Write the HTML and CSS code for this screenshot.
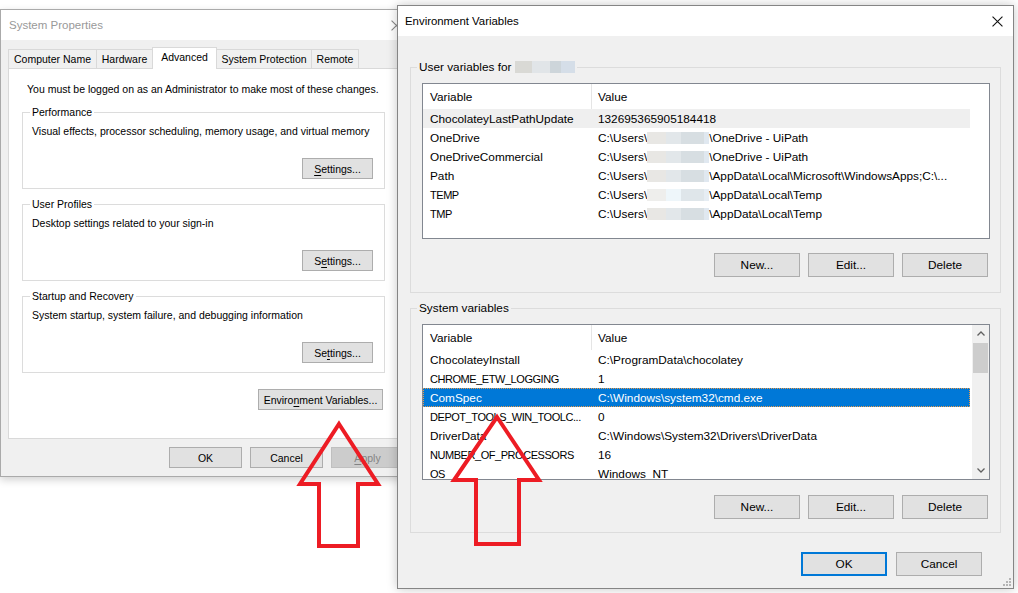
FILE: index.html
```html
<!DOCTYPE html>
<html lang="en">
<head>
    <meta charset="UTF-8">
    <title>System Properties - Environment Variables</title>
    <link rel="stylesheet" href="styles.css">
</head>
<body>
    <!-- System Properties (inactive, behind) -->
    <div class="window sysprops">
        <div class="titlebar">
            <span class="title">System Properties</span>
            <span class="close">
                <svg viewBox="0 0 10 10"><path d="M0.5 0.5L9.5 9.5M9.5 0.5L0.5 9.5"/></svg>
            </span>
        </div>
        <div class="window-body">
            <div class="tabs">
                <span class="tab" style="width: 89px">Computer Name</span>
                <span class="tab" style="width: 57px">Hardware</span>
                <span class="tab active" style="width: 65px">Advanced</span>
                <span class="tab" style="width: 96px">System Protection</span>
                <span class="tab" style="width: 48px">Remote</span>
            </div>
            <div class="tab-panel">
                <p class="note">You must be logged on as an Administrator to make most of these changes.</p>

                <fieldset class="group">
                    <legend>Performance</legend>
                    <p>Visual effects, processor scheduling, memory usage, and virtual memory</p>
                    <div class="group-actions">
                        <button class="btn btn-settings"><u>S</u>ettings...</button>
                    </div>
                </fieldset>

                <fieldset class="group">
                    <legend>User Profiles</legend>
                    <p>Desktop settings related to your sign-in</p>
                    <div class="group-actions">
                        <button class="btn btn-settings">S<u>e</u>ttings...</button>
                    </div>
                </fieldset>

                <fieldset class="group">
                    <legend>Startup and Recovery</legend>
                    <p>System startup, system failure, and debugging information</p>
                    <div class="group-actions">
                        <button class="btn btn-settings">Se<u>t</u>tings...</button>
                    </div>
                </fieldset>

                <div class="panel-actions">
                    <button class="btn btn-env">Enviro<u>n</u>ment Variables...</button>
                </div>
            </div>
            <div class="dialog-actions">
                <button class="btn btn-small">OK</button>
                <button class="btn btn-small">Cancel</button>
                <button class="btn btn-small" disabled><u>A</u>pply</button>
            </div>
        </div>
    </div>

    <!-- Environment Variables (active) -->
    <div class="window envvars">
        <div class="titlebar">
            <span class="title">Environment Variables</span>
            <span class="close">
                <svg viewBox="0 0 10 10"><path d="M0.5 0.5L9.5 9.5M9.5 0.5L0.5 9.5"/></svg>
            </span>
        </div>
        <div class="window-body">
            <fieldset class="group">
                <legend>User variables for <span class="blur blur-name"></span></legend>
                <div class="listview">
                    <div class="lv-body">
                        <div class="lv-head">
                            <span class="col-var">Variable</span>
                            <span class="col-val">Value</span>
                        </div>
                        <div class="lv-row hover">
                            <span class="col-var">ChocolateyLastPathUpdate</span>
                            <span class="col-val">132695365905184418</span>
                        </div>
                        <div class="lv-row">
                            <span class="col-var">OneDrive</span>
                            <span class="col-val">C:\Users\<span class="blur"></span>\OneDrive - UiPath</span>
                        </div>
                        <div class="lv-row">
                            <span class="col-var">OneDriveCommercial</span>
                            <span class="col-val">C:\Users\<span class="blur"></span>\OneDrive - UiPath</span>
                        </div>
                        <div class="lv-row">
                            <span class="col-var">Path</span>
                            <span class="col-val">C:\Users\<span class="blur"></span>\AppData\Local\Microsoft\WindowsApps;C:\...</span>
                        </div>
                        <div class="lv-row">
                            <span class="col-var caps">TEMP</span>
                            <span class="col-val">C:\Users\<span class="blur blur-light"></span>\AppData\Local\Temp</span>
                        </div>
                        <div class="lv-row">
                            <span class="col-var caps">TMP</span>
                            <span class="col-val">C:\Users\<span class="blur"></span>\AppData\Local\Temp</span>
                        </div>
                    </div>
                </div>
                <div class="list-actions">
                    <button class="btn btn-wide">New...</button>
                    <button class="btn btn-wide">Edit...</button>
                    <button class="btn btn-wide">Delete</button>
                </div>
            </fieldset>

            <fieldset class="group">
                <legend>System variables</legend>
                <div class="listview">
                    <div class="lv-body">
                        <div class="lv-head">
                            <span class="col-var">Variable</span>
                            <span class="col-val">Value</span>
                        </div>
                        <div class="lv-row">
                            <span class="col-var">ChocolateyInstall</span>
                            <span class="col-val">C:\ProgramData\chocolatey</span>
                        </div>
                        <div class="lv-row">
                            <span class="col-var caps">CHROME_ETW_LOGGING</span>
                            <span class="col-val">1</span>
                        </div>
                        <div class="lv-row selected">
                            <span class="col-var">ComSpec</span>
                            <span class="col-val">C:\Windows\system32\cmd.exe</span>
                        </div>
                        <div class="lv-row">
                            <span class="col-var caps">DEPOT_TOOLS_WIN_TOOLC...</span>
                            <span class="col-val">0</span>
                        </div>
                        <div class="lv-row">
                            <span class="col-var">DriverData</span>
                            <span class="col-val">C:\Windows\System32\Drivers\DriverData</span>
                        </div>
                        <div class="lv-row">
                            <span class="col-var caps">NUMBER_OF_PROCESSORS</span>
                            <span class="col-val">16</span>
                        </div>
                        <div class="lv-row">
                            <span class="col-var caps">OS</span>
                            <span class="col-val">Windows_NT</span>
                        </div>
                    </div>
                    <div class="scrollbar">
                        <span class="sb-arrow">
                            <svg viewBox="0 0 8 5"><path d="M0.5 4.5L4 1L7.5 4.5"/></svg>
                        </span>
                        <span class="sb-thumb"></span>
                        <span class="sb-track"></span>
                        <span class="sb-arrow">
                            <svg viewBox="0 0 8 5"><path d="M0.5 0.5L4 4L7.5 0.5"/></svg>
                        </span>
                    </div>
                </div>
                <div class="list-actions">
                    <button class="btn btn-wide">New...</button>
                    <button class="btn btn-wide">Edit...</button>
                    <button class="btn btn-wide">Delete</button>
                </div>
            </fieldset>

            <div class="dialog-actions">
                <button class="btn btn-wide btn-default">OK</button>
                <button class="btn btn-wide">Cancel</button>
            </div>
        </div>
        <svg class="grip" viewBox="0 0 10 10">
            <rect x="8" y="2" width="2" height="2"/>
            <rect x="5" y="5" width="2" height="2"/>
            <rect x="8" y="5" width="2" height="2"/>
            <rect x="2" y="8" width="2" height="2"/>
            <rect x="5" y="8" width="2" height="2"/>
            <rect x="8" y="8" width="2" height="2"/>
        </svg>
    </div>

    <!-- red callout arrows drawn over both windows -->
    <svg class="callouts" viewBox="0 0 1018 593">
        <polygon points="339,424 378,484 358,484 358,546 319,546 319,484 300,484"/>
        <polygon points="497,417 539,480 519,480 519,544 476,544 476,480 454,480"/>
    </svg>
</body>
</html>
```

FILE: styles.css
```css
* {
    margin: 0;
    padding: 0;
    box-sizing: border-box;
}

body {
    width: 1018px;
    height: 593px;
    overflow: hidden;
    position: relative;
    background: #ffffff;
    font-family: 'Liberation Sans', Arial, sans-serif;
    color: #000;
}

/* Windows */
.window {
    position: absolute;
    display: flex;
    flex-direction: column;
    background: #f0f0f0;
    border: 1px solid #aaaaaa;
}

.sysprops {
    left: 0;
    top: 9px;
    width: 413px;
    height: 468px;
    font-size: 10.5px;
    box-shadow: 0 3px 8px rgba(0, 0, 0, 0.18);
}

.envvars {
    left: 397px;
    top: 5px;
    width: 617px;
    height: 584px;
    font-size: 11.8px;
    border-color: #858585;
    box-shadow: 0 0 10px rgba(0, 0, 0, 0.22);
}

.titlebar {
    height: 30px;
    flex-shrink: 0;
    background: #fff;
    display: flex;
    align-items: center;
    justify-content: space-between;
    padding-left: 8px;
}

.titlebar .title {
    font-size: 11.5px;
}

.sysprops .titlebar .title {
    color: #999;
}

.envvars .titlebar {
    padding-left: 7px;
}

.envvars .titlebar .title {
    font-size: 11.4px;
}

.titlebar .close {
    width: 32px;
    height: 30px;
    display: flex;
    align-items: center;
    justify-content: center;
}

.titlebar .close svg {
    width: 11px;
    height: 11px;
    stroke: #111;
    stroke-width: 1;
    fill: none;
}

.sysprops .titlebar .close svg {
    stroke: #888;
}

.window-body {
    flex: 1;
    display: flex;
    flex-direction: column;
}

.sysprops .window-body {
    padding: 7px 7px 0;
}

.envvars .window-body {
    padding: 24px 12px 0;
}

/* Buttons */
.btn {
    font: inherit;
    color: #000;
    background: #e1e1e1;
    border: 1px solid #adadad;
    display: flex;
    align-items: center;
    justify-content: center;
    white-space: nowrap;
}

.btn u {
    text-decoration-thickness: 1px;
    text-underline-offset: 2px;
}

.btn:disabled {
    background: #cccccc;
    border-color: #bfbfbf;
    color: #838383;
}

.btn-settings {
    width: 71px;
    height: 21px;
}

.btn-env {
    width: 125px;
    height: 21px;
}

.btn-small {
    width: 73px;
    height: 21px;
}

.btn-wide {
    width: 86px;
    height: 24px;
}

.btn-default {
    border: 2px solid #0078d7;
}

/* Tabs */
.tabs {
    display: flex;
    align-items: flex-end;
    height: 21px;
    position: relative;
    z-index: 1;
}

.tab {
    height: 19px;
    display: flex;
    align-items: center;
    justify-content: center;
    border: 1px solid #d9d9d9;
    border-bottom: none;
    background: #f0f0f0;
    white-space: nowrap;
}

.tab + .tab {
    margin-left: -1px;
}

.tab.active {
    height: 22px;
    margin-bottom: -1px;
    background: #fff;
    padding-bottom: 3px;
    position: relative;
}

.tab-panel {
    height: 371px;
    background: #fff;
    border: 1px solid #d9d9d9;
    padding: 13px 13px 0;
}

.note {
    line-height: 15px;
    padding-left: 5px;
}

/* Group boxes */
.group {
    border: 1px solid #dcdcdc;
    min-width: 0;
}

.group legend {
    line-height: 15px;
    padding: 0 2px;
    margin-left: -2px;
}

.sysprops .group {
    width: 363px;
    margin-top: 8px;
    padding: 0 11px 9px 9px;
}

.sysprops .group p {
    line-height: 15px;
    margin-top: 4px;
}

.group-actions,
.panel-actions,
.list-actions,
.dialog-actions {
    display: flex;
    justify-content: flex-end;
}

.group-actions {
    margin-top: 19px;
}

.panel-actions {
    margin-top: 16px;
    width: 363px;
    padding-right: 2px;
}

.sysprops .dialog-actions {
    gap: 8px;
    margin-top: 8px;
    padding-right: 1px;
}

.envvars .group {
    padding: 0 10px 15px 11px;
}

.envvars .group + .group {
    margin-top: 8px;
    padding-bottom: 13px;
}

.envvars .group legend {
    margin-left: -5px;
}

.envvars .dialog-actions {
    gap: 9px;
    margin-top: 19px;
    padding-right: 19px;
}

/* List views */
.listview {
    height: 156px;
    margin-top: 8px;
    background: #fff;
    border: 1px solid #828790;
    display: flex;
    overflow: hidden;
}

.lv-body {
    flex: 1;
}

.lv-head,
.lv-row {
    width: 547px;
    display: flex;
    white-space: nowrap;
}

.lv-head {
    height: 25px;
}

.lv-row {
    height: 19px;
}

.col-var {
    width: 169px;
    flex-shrink: 0;
    padding-left: 7px;
    overflow: hidden;
    display: flex;
    align-items: center;
}

.col-var.caps {
    font-size: 11px;
    letter-spacing: -0.45px;
}

.col-val {
    flex: 1;
    padding-left: 6px;
    display: flex;
    align-items: center;
}

.lv-head .col-var {
    border-right: 1px solid #e5e5e5;
}

.lv-row.hover {
    background: #efefef;
}

.lv-row.selected {
    background: #0078d7;
    color: #fff;
    outline: 1px dotted #e89a4a;
    outline-offset: -1px;
}

.list-actions {
    gap: 8px;
    margin-top: 14px;
    padding-right: 2px;
}

.envvars .group + .group .list-actions {
    margin-top: 15px;
}

/* Scrollbar */
.scrollbar {
    width: 17px;
    flex-shrink: 0;
    background: #f0f0f0;
    display: flex;
    flex-direction: column;
}

.sb-arrow {
    height: 17px;
    display: flex;
    align-items: center;
    justify-content: center;
}

.sb-arrow svg {
    width: 8px;
    height: 5px;
    stroke: #606060;
    stroke-width: 1.3;
    fill: none;
}

.sb-thumb {
    height: 30px;
    margin: 1px 1px 0;
    background: #cdcdcd;
}

.sb-track {
    flex: 1;
}

/* Blurred user names */
.blur {
    display: inline-block;
    width: 62px;
    height: 12px;
    background: linear-gradient(90deg, #e8e7e4 0 30%, #e2e7ea 30% 55%, #d7dee2 55% 92%, #e0e8f0 92%);
}

.blur-light {
    background: linear-gradient(90deg, #eeeeec 0 30%, #eef6fa 30% 55%, #dfe6ea 55% 92%, #e6edf3 92%);
}

.blur-name {
    width: 60px;
    vertical-align: -2px;
    background: linear-gradient(90deg, #d9d9d5 0 29%, #e1e5e8 29% 58%, #cdd5da 58% 77%, #d5dee8 77%);
}

/* Resize grip */
.grip {
    position: absolute;
    right: 2px;
    bottom: 2px;
    width: 10px;
    height: 10px;
    fill: #b4b4b4;
}

/* Callout arrows */
.callouts {
    position: absolute;
    left: 0;
    top: 0;
    width: 1018px;
    height: 593px;
    z-index: 10;
    pointer-events: none;
}

.callouts polygon {
    fill: none;
    stroke: #ed1c24;
    stroke-width: 4;
    stroke-linejoin: miter;
}
```
